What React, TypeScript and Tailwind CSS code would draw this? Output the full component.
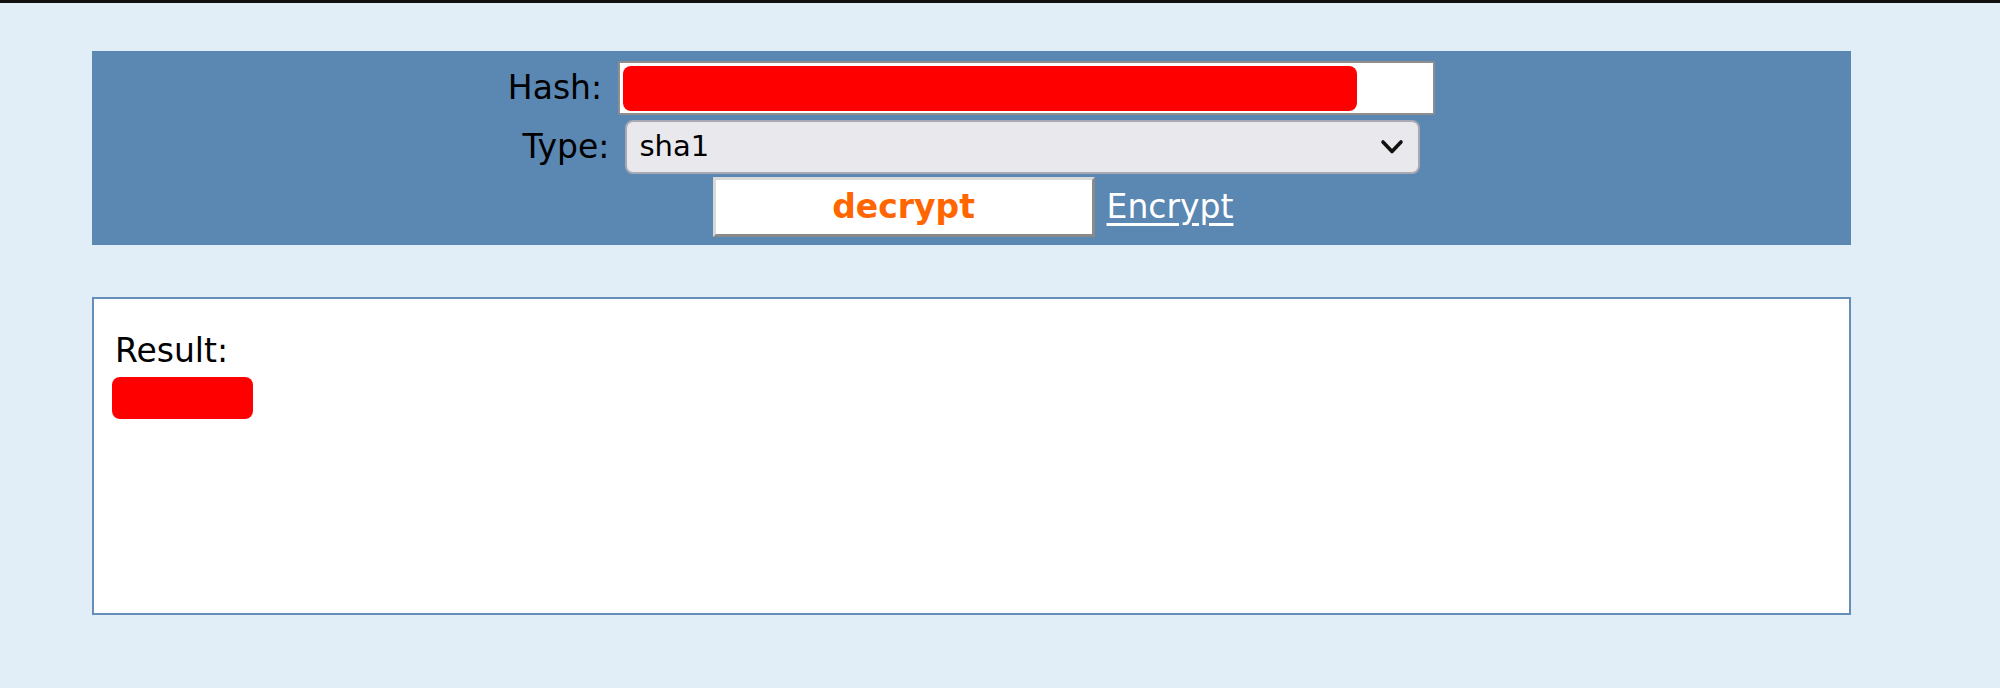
import React from "react";

function HashForm() {
  return (
    <div className="flex h-[194px] flex-col items-center bg-[#5b87b3] pt-[10px]">
      <div className="flex h-[54px] items-center gap-4">
        <span className="text-black">Hash:</span>
        <div className="flex h-[54px] w-[817px] items-center rounded-[2px] border-2 border-[#8e8e8e] bg-white pl-[3px]">
          <div className="h-[45px] w-[734px] rounded-[8px] bg-[#ff0000]" />
        </div>
      </div>

      <div className="mt-[5px] flex h-[54px] items-center gap-4">
        <span className="text-black">Type:</span>
        <div className="flex h-[54px] w-[795px] items-center justify-between rounded-[8px] border-2 border-[#a9a9b3] bg-[#e9e9ed] pl-[12px] pr-[14px]">
          <span className="text-[29px] text-black">sha1</span>
          <svg width="24" height="16" viewBox="0 0 24 16" fill="none">
            <polyline
              points="3,3 12,12.5 21,3"
              stroke="#111"
              strokeWidth="3.6"
              strokeLinecap="round"
              strokeLinejoin="round"
            />
          </svg>
        </div>
      </div>

      <div className="mt-[3px] ml-[3px] flex h-[60px] items-center">
        <button className="h-[60px] w-[382px] border-[3px] border-t-[#d9d9d9] border-l-[#d9d9d9] border-b-[#8a8a8a] border-r-[#8a8a8a] bg-white font-bold text-[#ff6600]">
          decrypt
        </button>
        <a href="#" className="ml-3 text-white underline underline-offset-[5px]">
          Encrypt
        </a>
      </div>
    </div>
  );
}

function ResultBox() {
  return (
    <div className="mt-[52px] h-[318px] border-2 border-[#648fba] bg-white pl-[18px] pt-[33px]">
      <div className="pl-[3px] leading-[38px] text-black">Result:</div>
      <div className="mt-[7px] h-[42px] w-[141px] rounded-[8px] bg-[#ff0000]" />
    </div>
  );
}

export default function App() {
  return (
    <div className="min-h-screen bg-[#e2eef7] font-['DejaVu_Sans',sans-serif] text-[33px]">
      <div className="h-[3px] bg-[#111]" />
      <div className="ml-[92px] w-[1759px] pt-[48px]">
        <HashForm />
        <ResultBox />
      </div>
    </div>
  );
}
